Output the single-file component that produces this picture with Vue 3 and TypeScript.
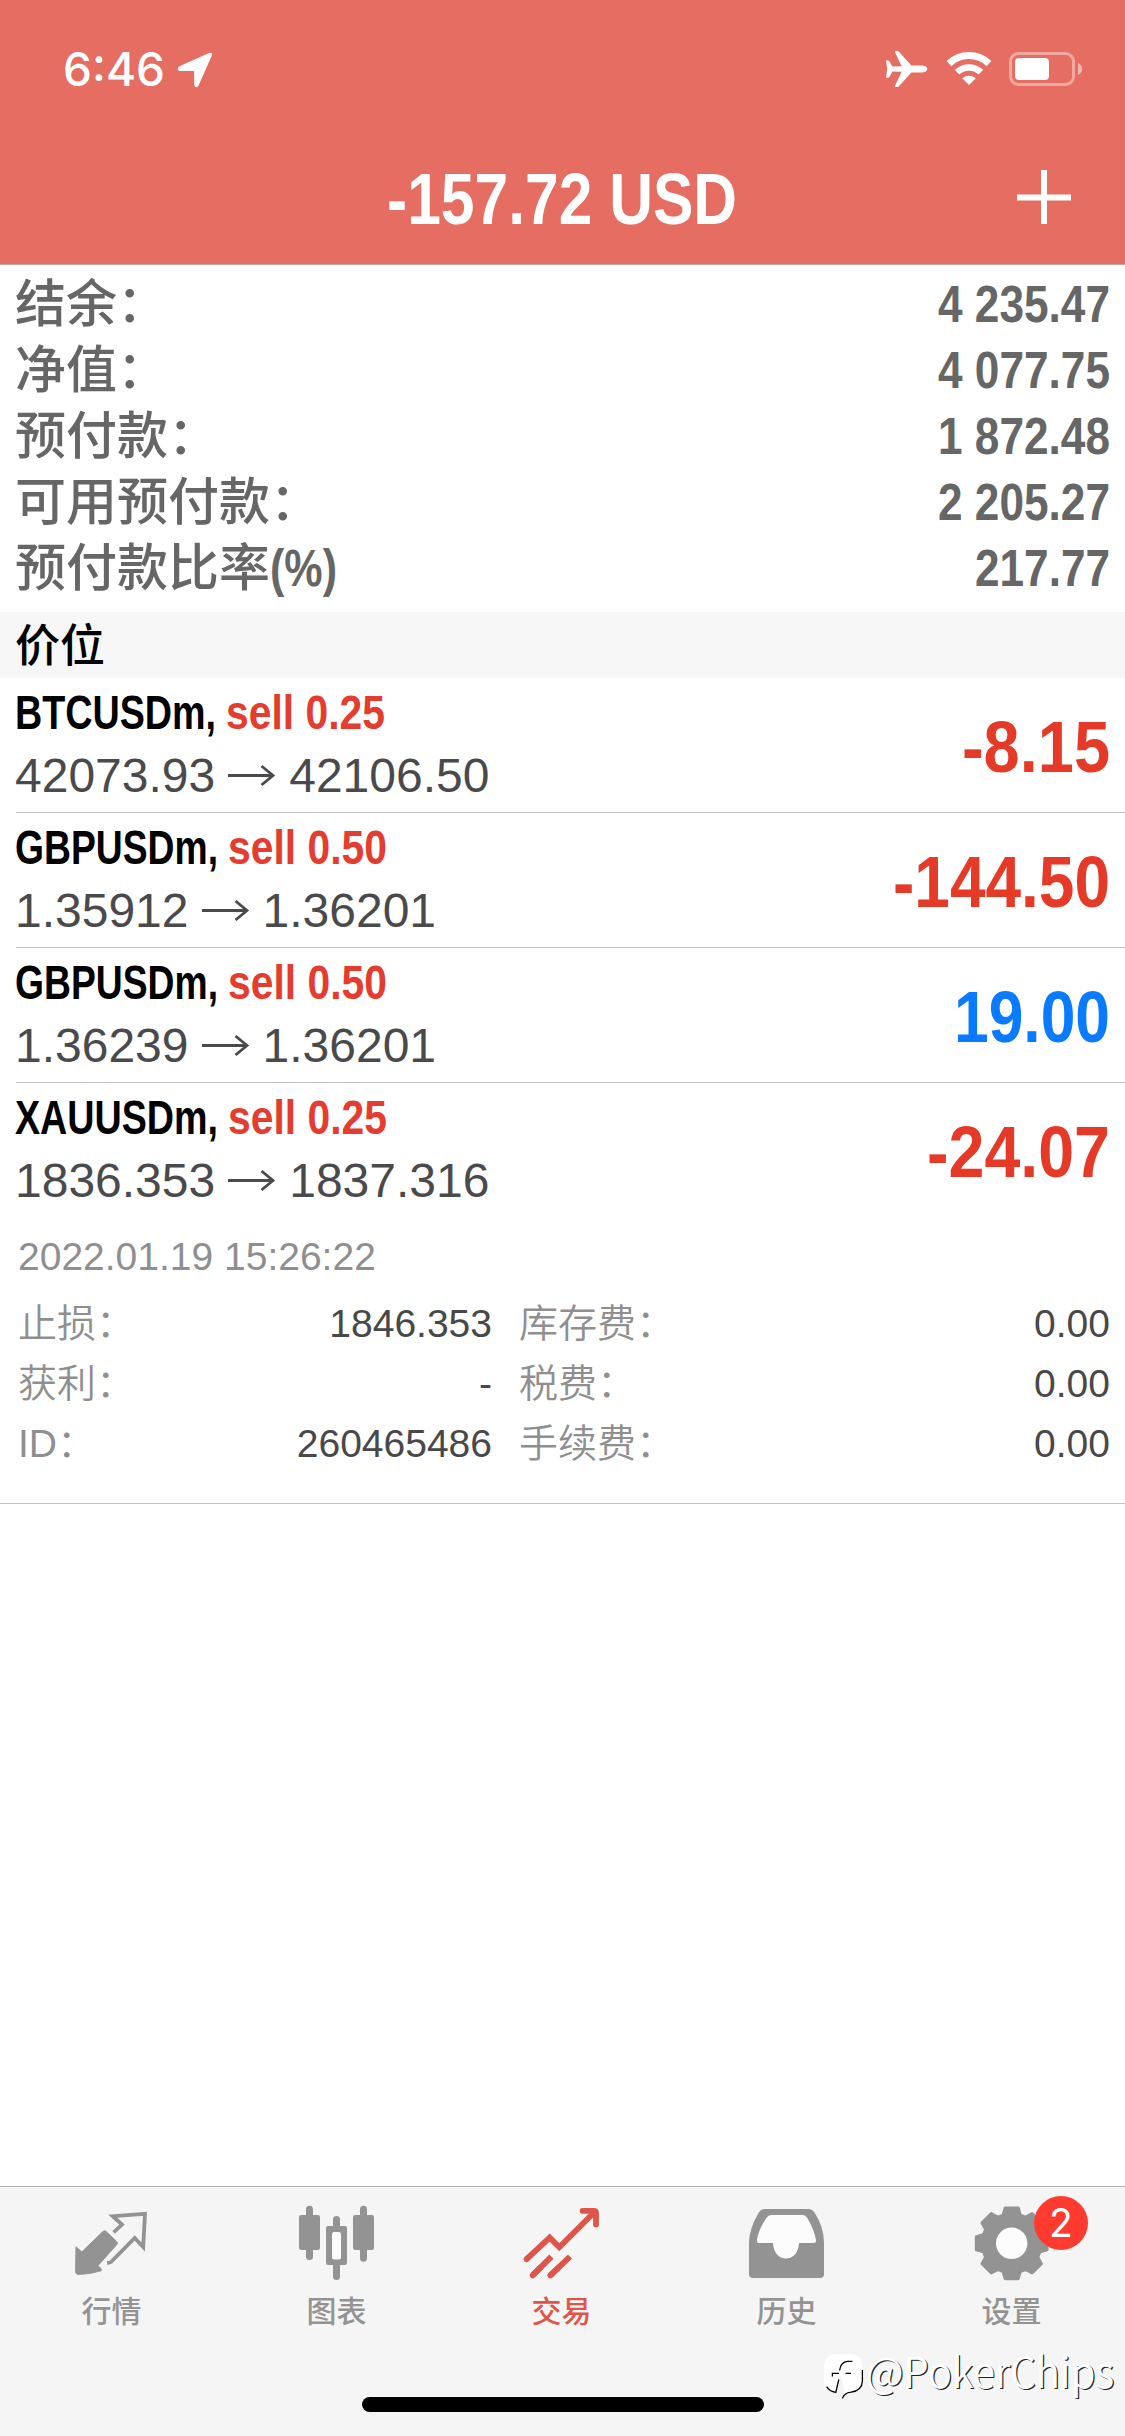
<script setup lang="ts">
import type { Directive } from 'vue'

interface SummaryRow { label: string; value: string; width: number; suffix?: string }
interface Position {
  symbol: string; symbolWidth: number; deal: string
  open: string; current: string; profit: string; profitWidth: number; gain?: boolean
}
interface Detail { label: string; value: string }
interface Tab { label: string; icon: string; active?: boolean; badge?: string }

// Condenses a text run horizontally to the given advance width.
const vFit: Directive<HTMLElement, number> = {
  mounted(el, { value }) {
    const natural = el.getBoundingClientRect().width
    el.style.transformOrigin = '0 50%'
    el.style.transform = `scaleX(${value / natural})`
    el.style.marginRight = `${value - natural}px`
  },
}

const summary: SummaryRow[] = [
  { label: '结余：', value: '4 235.47', width: 172 },
  { label: '净值：', value: '4 077.75', width: 172 },
  { label: '预付款：', value: '1 872.48', width: 172 },
  { label: '可用预付款：', value: '2 205.27', width: 172 },
  { label: '预付款比率', suffix: '(%)', value: '217.77', width: 135 },
]

const positions: Position[] = [
  { symbol: 'BTCUSDm,', symbolWidth: 201, deal: 'sell 0.25', open: '42073.93', current: '42106.50', profit: '-8.15', profitWidth: 148 },
  { symbol: 'GBPUSDm,', symbolWidth: 203, deal: 'sell 0.50', open: '1.35912', current: '1.36201', profit: '-144.50', profitWidth: 217 },
  { symbol: 'GBPUSDm,', symbolWidth: 203, deal: 'sell 0.50', open: '1.36239', current: '1.36201', profit: '19.00', profitWidth: 156, gain: true },
  { symbol: 'XAUUSDm,', symbolWidth: 203, deal: 'sell 0.25', open: '1836.353', current: '1837.316', profit: '-24.07', profitWidth: 183 },
]

const leftDetails: Detail[] = [
  { label: '止损：', value: '1846.353' },
  { label: '获利：', value: '-' },
  { label: 'ID：', value: '260465486' },
]
const rightDetails: Detail[] = [
  { label: '库存费：', value: '0.00' },
  { label: '税费：', value: '0.00' },
  { label: '手续费：', value: '0.00' },
]

const tabs: Tab[] = [
  { label: '行情', icon: 'quotes' },
  { label: '图表', icon: 'chart' },
  { label: '交易', icon: 'trade', active: true },
  { label: '历史', icon: 'history' },
  { label: '设置', icon: 'settings', badge: '2' },
]

function gearPoints(cx: number, cy: number): string {
  const profile: [number, number][] = [[-17, 29.5], [-10.5, 36], [10.5, 36], [17, 29.5]]
  const pts: string[] = []
  for (let tooth = 0; tooth < 8; tooth++) {
    for (const [offset, r] of profile) {
      const a = ((tooth * 45 + offset) * Math.PI) / 180
      pts.push(`${(cx + r * Math.cos(a)).toFixed(2)},${(cy + r * Math.sin(a)).toFixed(2)}`)
    }
  }
  return pts.join(' ')
}
const gear = gearPoints(111.7, 56.3)
</script>

<template>
  <div class="screen">
    <header class="header">
      <div class="status">
        <span class="time"><span v-fit="102">6:46</span></span>
        <svg class="locate" width="36" height="36" viewBox="0 0 36 36">
          <path d="M31.5 1.2 Q36 -.2 34.6 4 L21.8 33 Q20.6 35.8 18.8 35.2 Q17.2 34.8 17.2 32.6 V20.2 Q17.2 19 16 19 H3.4 Q.8 19 .6 17 Q.4 15.2 3 14 Z" fill="#fff" />
        </svg>
        <div class="indicators">
          <svg width="42" height="36" viewBox="0 0 42 36">
            <path d="M0 9.6 H1.6 Q3 9.6 3.7 10.8 L6.4 15.6 L15.6 15.2 L9 1.2 Q8.6 0 10 0 H11 Q12.4 0 13.2 1 L25.4 14.6 H36.5 C39.5 14.8 41.3 16.6 41.3 18 C41.3 19.4 39.5 21.2 36.5 21.4 H25.4 L13.2 35 Q12.4 36 11 36 H10 Q8.6 36 9 34.8 L15.6 20.8 L6.4 20.4 L3.7 25.6 Q3 26.8 1.6 26.8 H0 L1.2 18 Z" fill="#fff" />
          </svg>
          <svg class="wifi" width="48" height="36" viewBox="0 0 48 36">
            <path d="M4 12.6 A29 29 0 0 1 44 12.6" fill="none" stroke="#fff" stroke-width="7" />
            <path d="M12 21.2 A17.6 17.6 0 0 1 36 21.2" fill="none" stroke="#fff" stroke-width="6.6" />
            <path d="M24 34 L17.2 27.2 Q24 22.4 30.8 27.2 Z" fill="#fff" />
          </svg>
          <svg class="battery" width="74" height="36" viewBox="0 0 74 36">
            <rect x="1.5" y="2.5" width="63" height="31" rx="8" fill="none" stroke="#fff" stroke-opacity=".4" stroke-width="3" />
            <rect x="6" y="7" width="34" height="22" rx="4" fill="#fff" />
            <path d="M69 12 Q73 13.5 73 18 Q73 22.5 69 24 Z" fill="#fff" fill-opacity=".5" />
          </svg>
        </div>
      </div>
      <div class="nav">
        <h1 class="total"><span v-fit="350">-157.72 USD</span></h1>
        <svg class="add" width="56" height="56" viewBox="0 0 56 56">
          <path d="M1 28.5 H55 M28 1 V55" stroke="#fff" stroke-width="6" />
        </svg>
      </div>
    </header>

    <section class="summary">
      <div v-for="row in summary" :key="row.label" class="sum-row">
        <span class="sum-label">{{ row.label }}<span v-if="row.suffix" v-fit="67" class="suffix">{{ row.suffix }}</span></span>
        <span v-fit="row.width" class="sum-value">{{ row.value }}</span>
      </div>
    </section>

    <h2 class="band">价位</h2>

    <section>
      <article v-for="(p, i) in positions" :key="i" class="position">
        <div class="info">
          <div class="name">
            <span v-fit="p.symbolWidth" class="symbol">{{ p.symbol }}</span>
            <span v-fit="159" class="deal">{{ p.deal }}</span>
          </div>
          <div class="prices">
            <span>{{ p.open }}</span>
            <svg class="arrow" width="48" height="54" viewBox="0 0 48 54">
              <path d="M0 26.5 H45 M33.5 17 L45 26.5 L33.5 36" fill="none" stroke="currentColor" stroke-width="2.8" />
            </svg>
            <span>{{ p.current }}</span>
          </div>
        </div>
        <span v-fit="p.profitWidth" class="profit" :class="{ gain: p.gain }">{{ p.profit }}</span>
      </article>
      <div class="details">
        <div class="date">2022.01.19 15:26:22</div>
        <div class="columns">
          <dl class="left">
            <div v-for="d in leftDetails" :key="d.label" class="detail"><dt>{{ d.label }}</dt><dd>{{ d.value }}</dd></div>
          </dl>
          <dl class="right">
            <div v-for="d in rightDetails" :key="d.label" class="detail"><dt>{{ d.label }}</dt><dd>{{ d.value }}</dd></div>
          </dl>
        </div>
      </div>
    </section>

    <footer class="tabbar">
      <nav class="tabs">
        <div v-for="t in tabs" :key="t.icon" class="tab" :class="{ active: t.active }">
          <svg width="225" height="100" viewBox="0 0 225 100">
            <g v-if="t.icon === 'quotes'">
              <path d="M76 59.8 L81.8 65 L103 44.4 Q104.5 43.2 106 44.4 L116.6 54.4 Q118 56 116.8 57.6 L98 78.6 L101.6 82.4 L101 83.8 Q90 87.4 78 87.4 Q75.6 87 75.6 84.6 Z" fill="currentColor" stroke="currentColor" stroke-width="1" stroke-linejoin="round" />
              <path d="M113.6 45.4 L122 37.6 L112.8 29.2 L145 26.8 L143.2 60 L134.7 51 L111 75 Q110 76 107 75.8" fill="none" stroke="currentColor" stroke-width="3.8" />
            </g>
            <g v-else-if="t.icon === 'chart'" fill="currentColor">
              <rect x="81" y="18.7" width="7" height="54.3" rx="3.5" />
              <rect x="74" y="28" width="21" height="35" rx="2.2" />
              <rect x="108" y="29" width="7" height="64" rx="3.5" />
              <rect x="101" y="39" width="21" height="39" rx="2.2" />
              <rect x="107" y="45" width="9" height="27.5" rx="2.2" fill="#fcfcfc" />
              <rect x="135" y="18.7" width="7" height="56" rx="3.5" />
              <rect x="128" y="28" width="21" height="35" rx="2.2" />
            </g>
            <g v-else-if="t.icon === 'trade'" fill="none" stroke="currentColor" stroke-width="5.8">
              <path d="M76.6 72.2 L99.7 50.6 L109.3 60.2 L144.5 25" stroke-linecap="round" />
              <path d="M132.6 23.8 H144 Q146 23.8 146 25.8 V37.4" stroke-linecap="round" />
              <path d="M82.6 88.4 L101.4 69.6 M100.3 88.4 L120 69.6" />
              <path d="M82.6 88.4 L90 81 M100.3 88.4 L108 81" stroke-linecap="round" />
            </g>
            <g v-else-if="t.icon === 'history'">
              <path fill="currentColor" d="M90 22 H133.5 Q137.5 22 139.5 25.5 Q149 40 149 56 V87 Q149 91 145 91 H78 Q74 91 74 87 V56 Q74 42 83.8 25.5 Q86 22 90 22 Z" />
              <path fill="#fcfcfc" d="M96 28 Q93.5 28 91.8 30.5 Q83.5 42 82 53 Q81.8 56 84 56 H98 C98.4 66 104 71.4 111 71.4 C118 71.4 123.6 66 124 56 H139 Q141.4 56 141 53 Q139 42 132 30.5 Q130.4 28 128 28 Z" />
            </g>
            <g v-else>
              <polygon :points="gear" fill="currentColor" stroke="currentColor" stroke-width="3" stroke-linejoin="round" />
              <circle cx="111.7" cy="56.3" r="15.7" fill="#fcfcfc" />
            </g>
          </svg>
          <span class="tab-label">{{ t.label }}</span>
          <span v-if="t.badge" class="badge">{{ t.badge }}</span>
        </div>
      </nav>
      <div class="home-indicator"></div>
      <div class="watermark">
        <svg width="40" height="46" viewBox="0 0 40 46">
          <path d="M10 0 H28 Q38 1 38 12 V28 Q37 37 27 38 L22 39 L18 44 L14 38 Q0 38 0 26 V12 Q1 1 10 0 Z" fill="#fff" />
          <path d="M16.5 21 L13.5 38.5 L18 44 L20.5 38 Z" fill="#f2f2f2" />
          <path d="M28.4 7.4 H23.5 Q16.5 8 15.6 16.5 M8.4 22.5 V19.4 H15 M21.6 19.4 H27 M14.8 25.5 L11.8 38.4 Q5.5 37.4 2.6 32.6 M18.4 44.4 Q20.4 38.8 27 38.2 Q38 36.8 38.4 27 V16" fill="none" stroke="#000" stroke-width="1.3" />
        </svg>
        <span v-fit="248" class="handle">@PokerChips</span>
      </div>
    </footer>
  </div>
</template>

<style>
body { margin: 0; background: #fff; }
</style>

<style scoped>
.screen {
  width: 1125px; height: 2436px; overflow: hidden; display: flex; flex-direction: column;
  background: #fff; font-family: "Liberation Sans", "Noto Sans CJK SC", sans-serif; color: #000;
}
[class] > span, .profit, .sum-value { white-space: nowrap; }
h1, h2, dl, dd { margin: 0; }
.header { height: 264px; flex: none; background: #e66d61; border-bottom: 1px solid #c9a39f; color: #fff; }
.status { height: 132px; display: flex; align-items: flex-start; padding-left: 63px; }
.time { font: 500 47px/56px Inter, sans-serif; margin-top: 41px; }
.time span { display: inline-block; }
.locate { margin: 52px 0 0 12px; }
.indicators { margin: 51px 42px 0 auto; display: flex; }
.wifi { margin-left: 17px; }
.battery { margin-left: 16px; }
.nav { height: 132px; display: flex; align-items: center; justify-content: center; position: relative; }
.total { font-size: 72px; line-height: 132px; font-weight: 700; margin: 1px 1px 0 0; }
.total span { display: inline-block; }
.add { position: absolute; right: 53px; top: 37px; }

.summary { height: 328px; padding: 7px 15px 12px 15px; color: #666; font-size: 51px; }
.sum-row { display: flex; justify-content: space-between; height: 66px; line-height: 66px; }
.sum-label { font-weight: 500; }
.suffix { display: inline-block; font-weight: 700; line-height: 60px; }
.sum-value { display: inline-block; font-weight: 700; }

.band { height: 66px; background: #f7f7f7; padding-left: 15px; font: 500 45px/62px "Noto Sans CJK SC", sans-serif; }

.position { height: 134px; margin-left: 16px; padding-right: 15px; border-bottom: 1px solid #c3c3c5; display: flex; align-items: center; justify-content: space-between; }
.position:nth-of-type(4) { border-bottom-color: transparent; }
.info { display: flex; flex-direction: column; font-size: 48px; height: 134px; }
.name { display: flex; gap: 10px; line-height: 54px; padding-top: 8px; font-weight: 700; }
.symbol { display: inline-block; margin-left: -1px; }
.deal { display: inline-block; color: #e43c2e; }
.prices { display: flex; gap: 13px; line-height: 54px; padding-top: 9px; color: #4a4a4c; margin-left: -1px; }
.profit { display: inline-block; font-size: 72px; font-weight: 700; color: #e63a28; padding-top: 4px; }
.profit.gain { color: #0a7aff; }

.details { height: 285px; border-bottom: 1px solid #c3c3c5; font-size: 39px; color: #8f8f8f; }
.date { padding: 9px 0 0 18px; line-height: 60px; }
.columns { display: flex; padding: 7px 15px 0 18px; }
.left { width: 474px; }
.right { flex: 1; padding-left: 27px; }
.detail { display: flex; justify-content: space-between; height: 60px; line-height: 60px; }
dt { font-weight: 350; }
dd { color: #48484a; }

.tabbar { margin-top: auto; height: 249px; background: #f5f5f5; border-top: 1px solid #b0b0b0; position: relative; }
.tabs { display: flex; }
.tab { width: 225px; position: relative; display: flex; flex-direction: column; align-items: center; color: #939393; }
.tab.active { color: #df554a; }
.tab svg { display: block; }
.tab-label { font: 500 30px/44px "Noto Sans CJK SC", sans-serif; margin: 0 2px 2px 0; }
.badge { position: absolute; left: 134px; top: 9px; width: 54px; height: 54px; border-radius: 50%; background: #ff3b30; color: #fff; text-align: center; font: 400 39px/54px Inter, sans-serif; }
.home-indicator { width: 402px; height: 15px; border-radius: 8px; background: #000; margin: 64px auto 0; }
.watermark { position: absolute; left: 824px; top: 167px; display: flex; }
.handle { display: inline-block; margin-left: 2px; margin-top: -10px; font: 350 42px/52px "Noto Sans CJK SC", sans-serif; color: #fff; text-shadow: 1.3px 1.3px 0 #222; }
</style>
